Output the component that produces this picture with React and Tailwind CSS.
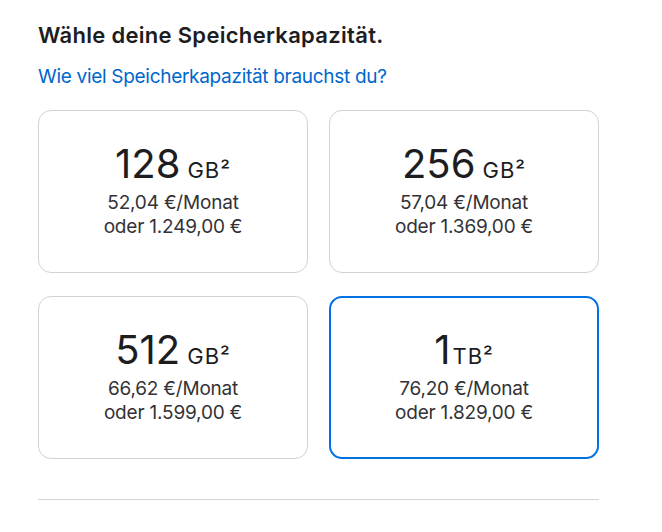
export default function App() {
  const items = [
    { n: "128", u: "GB", m: "52,04", t: "1.249,00" },
    { n: "256", u: "GB", m: "57,04", t: "1.369,00" },
    { n: "512", u: "GB", m: "66,62", t: "1.599,00" },
    { n: "1", u: "TB", m: "76,20", t: "1.829,00", sel: true },
  ];
  return (
    <div className="w-[662px] h-[532px] bg-white pl-[38px] pt-[21px]" style={{ fontFamily: "Inter, 'Noto Sans', sans-serif" }}>
      <div className="w-[561px]">
        <h2 className="text-[22px] leading-[28px] font-semibold text-[#1d1d1f] tracking-[0.3px]">Wähle deine Speicherkapazität.</h2>
        <div className="mt-[16px] text-[19px] leading-[24px] text-[#0066cc] tracking-[-0.3px]">Wie viel Speicherkapazität brauchst du?</div>
        <div className="mt-[21px] grid grid-cols-2 gap-x-[21px] gap-y-[23px]">
          {items.map((it) => (
            <div
              key={it.n}
              className={
                "h-[163px] rounded-[13px] flex flex-col items-center text-[#1d1d1f] " +
                (it.sel ? "border-2 border-[#0071e3] pt-[32px]" : "border border-[#d2d2d7] pt-[33px]")
              }
            >
              <div className="flex items-baseline leading-[40px]">
                <span className="text-[40px] tracking-[0px]">{it.n}</span>
                <span className={"text-[22px] tracking-[1px] " + (it.sel ? "ml-[2px]" : "ml-[7px]")}>{it.u}²</span>
              </div>
              <div className="mt-[1px] text-[19px] leading-[24px] text-[#333336] tracking-[-0.2px]">{it.m} €/Monat</div>
              <div className="text-[19px] leading-[24px] text-[#333336] tracking-[-0.2px]">oder {it.t} €</div>
            </div>
          ))}
        </div>
        <div className="mt-[40px] border-t border-[#d2d2d7]" />
      </div>
    </div>
  );
}
